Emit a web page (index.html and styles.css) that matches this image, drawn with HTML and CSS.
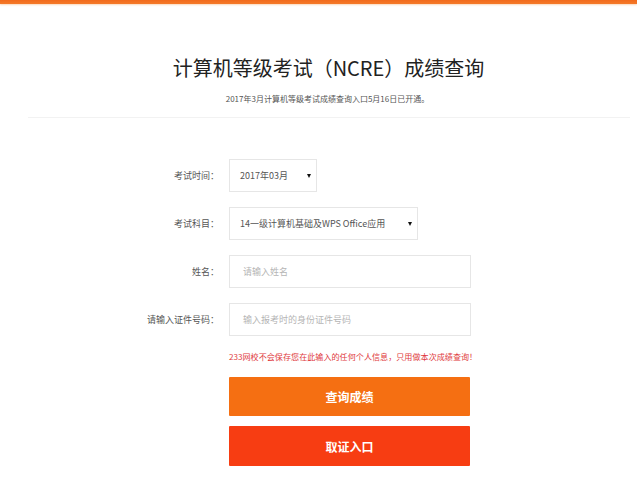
FILE: index.html
```html
<!DOCTYPE html>
<html lang="zh-CN">
<head>
<meta charset="utf-8">
<title>计算机等级考试（NCRE）成绩查询</title>
<link rel="stylesheet" href="styles.css">
</head>
<body>
<div class="topbar"></div>
<header class="head">
  <h1 class="title">计算机等级考试（NCRE）成绩查询</h1>
  <p class="sub">2017年3月计算机等级考试成绩查询入口5月16日已开通。</p>
</header>
<div class="divider"></div>
<form class="form">
  <label class="lbl">考试时间：</label>
  <div class="sel sel-sm"><span>2017年03月</span><i class="arrow"></i></div>
  <label class="lbl">考试科目：</label>
  <div class="sel sel-md"><span>14一级计算机基础及WPS Office应用</span><i class="arrow"></i></div>
  <label class="lbl">姓名：</label>
  <div class="inp"><span class="ph">请输入姓名</span></div>
  <label class="lbl">请输入证件号码：</label>
  <div class="inp"><span class="ph">输入报考时的身份证件号码</span></div>
  <div class="blank"></div>
  <div class="actions">
    <p class="warn">233网校不会保存您在此输入的任何个人信息，只用做本次成绩查询！</p>
    <button type="button" class="btn btn-query">查询成绩</button>
    <button type="button" class="btn btn-cert">取证入口</button>
  </div>
</form>
</body>
</html>
```

FILE: styles.css
```css
html, body {
  margin: 0;
  padding: 0;
  background: #fff;
}
body {
  font-family: "Noto Sans CJK SC", "Noto Sans", sans-serif;
  color: #555;
  width: 637px;
  height: 482px;
  overflow: hidden;
}
.topbar {
  height: 4px;
  background: linear-gradient(#f26a1b, #f47a2a);
  box-shadow: 0 1px 2px rgba(244, 140, 60, 0.35);
}
.head {
  padding-top: 52px;
  text-align: center;
}
.title {
  margin: 0;
  padding-left: 20px;
  font-size: 20px;
  line-height: 24px;
  font-weight: 400;
  color: #222;
  letter-spacing: 0;
}
.sub {
  margin: 13px 0 0;
  font-size: 8px;
  line-height: 12px;
  color: #555;
  padding-left: 18px;
}
.divider {
  margin: 12px 7px 0 28px;
  height: 1px;
  background: #f2f2f2;
}
.form {
  margin-top: 41px;
  display: grid;
  grid-template-columns: 219px auto;
  column-gap: 10px;
  row-gap: 15px;
  align-items: center;
  justify-items: start;
}
.lbl {
  justify-self: end;
  font-size: 9px;
  line-height: 12px;
  color: #555;
}
.sel, .inp {
  box-sizing: border-box;
  height: 33px;
  border: 1px solid #e6e6e6;
  display: flex;
  align-items: center;
  font-size: 9px;
  line-height: 12px;
  color: #555;
}
.sel {
  padding: 0 5px 0 10px;
  justify-content: space-between;
}
.sel-sm { width: 88px; }
.sel-md { width: 189px; }
.inp {
  width: 242px;
  padding-left: 13px;
}
.ph { color: #b5b5b5; }
.arrow {
  width: 0;
  height: 0;
  border-left: 2.5px solid transparent;
  border-right: 2.5px solid transparent;
  border-top: 4px solid #111;
}
.blank { height: 0; }
.actions {
  display: flex;
  flex-direction: column;
}
.warn {
  margin: 0;
  font-size: 8.1px;
  line-height: 12px;
  color: #e0393d;
  white-space: nowrap;
}
.btn {
  width: 241px;
  border: 0;
  border-radius: 1px;
  color: #fff;
  font-family: "Noto Sans CJK SC", sans-serif;
  font-weight: 700;
  font-size: 12px;
  padding: 0;
  cursor: pointer;
}
.btn-query {
  margin-top: 14px;
  height: 39px;
  background: #f56f12;
}
.btn-cert {
  margin-top: 10px;
  height: 40px;
  background: #f73d12;
}
```
